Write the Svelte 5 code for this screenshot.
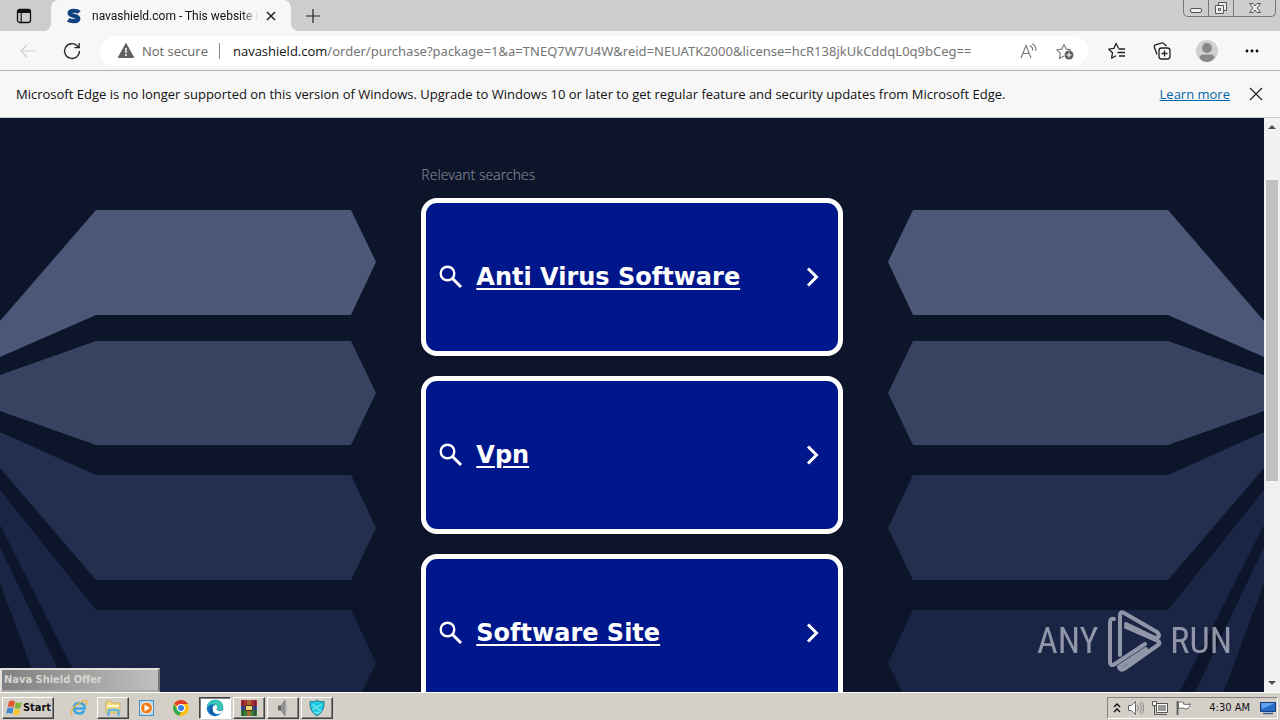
<script>
  const searches = ['Anti Virus Software', 'Vpn', 'Software Site'];
  const plates = [
    { fill: '#4c5676', points: '0,203 96,92 351,92 376,144 351,197 96,197 0,239' },
    { fill: '#384261', points: '0,257 96,223 351,223 376,275 351,327 96,327 0,293' },
    { fill: '#242e4e', points: '0,314 96,357 351,357 376,410 351,462 96,462 0,350' },
    { fill: '#1a2444', points: '0,372 96,492 351,492 376,545 351,597 96,597 0,407' },
    { fill: '#1a2444', points: '0,429 96,631 96,725 0,465' }
  ];
  let address = $state('/order/purchase?package=1&a=TNEQ7W7U4W&reid=NEUATK2000&license=hcR138jkUkCddqL0q9bCeg==');
</script>

<div class="screen">
  <header class="tabs">
    <button class="tab-actions" aria-label="Tab actions">
      <svg width="16" height="16" viewBox="0 0 16 16"><rect x="1.5" y="1.5" width="13" height="13" rx="2" fill="none" stroke="#111" stroke-width="1.3" /><path d="M1.5 3.5a2 2 0 0 1 2-2h9a2 2 0 0 1 2 2V5h-13z" fill="#111" /><path d="M5.2 5v9" stroke="#111" stroke-width="1.2" /></svg>
    </button>
    <div class="tab">
      <svg width="16" height="16" viewBox="0 0 16 16"><path d="M13.200 4.400C11.500 2.600 4 1.600 3.600 5.100 3.400 8.600 12.600 7.200 12.300 10.700 12 14 4.500 13.400 2.200 11.700" fill="none" stroke="#12417f" stroke-width="4.200" /></svg>
      <span class="tab-title">navashield.com - This website i</span>
      <button class="tab-close" aria-label="Close tab"><svg width="10" height="10" viewBox="0 0 10 10"><path d="M1 1l8 8M9 1L1 9" stroke="#222" stroke-width="1.5" /></svg></button>
    </div>
    <button class="new-tab" aria-label="New tab"><svg width="14" height="14" viewBox="0 0 14 14"><path d="M7 0v14M0 7h14" stroke="#222" stroke-width="1.2" /></svg></button>
    <div class="window-buttons">
      <button aria-label="Minimize"><svg width="14" height="12" viewBox="0 0 14 12"><rect x="1.500" y="6.500" width="11" height="4" rx="1.500" fill="#eee" stroke="#555" /></svg></button>
      <button aria-label="Restore"><svg width="14" height="14" viewBox="0 0 14 14"><path d="M4.500 1.500h8v8h-3v3h-8v-8h3z" fill="#eee" stroke="#555" /><path d="M4.500 4.500h5v5M4.500 7.500h2v2h-2z" fill="none" stroke="#555" /></svg></button>
      <button class="wide" aria-label="Close window"><svg width="14" height="12" viewBox="0 0 14 12"><path d="M1.500 1.500h3.500l2 2.500 2-2.500h3.500L9 6l3.500 4.500H9L7 8l-2 2.500H1.500L5 6z" fill="#eee" stroke="#555" /></svg></button>
    </div>
  </header>

  <nav class="toolbar">
    <button class="tool" aria-label="Back" disabled><svg width="18" height="16" viewBox="0 0 18 16"><path d="M17 8H2M8 2L2 8l6 6" fill="none" stroke="#d0d0d0" stroke-width="1.200" /></svg></button>
    <button class="tool" aria-label="Refresh"><svg width="18" height="18" viewBox="0 0 18 18"><path d="M16.400 9A7.400 7.400 0 1 1 14.200 3.800L16 5.500M16.200 1v4.700h-4.700" fill="none" stroke="#222" stroke-width="1.300" /></svg></button>
    <div class="address">
      <svg width="16" height="15" viewBox="0 0 16 15"><path d="M8 .5L15.700 14.500H.3z" fill="#606060" stroke="#606060" stroke-linejoin="round" /><path d="M8 5v5M8 11v2" stroke="#fff" stroke-width="1.500" /></svg>
      <span class="security">Not secure</span>
      <label for="url">navashield.com</label>
      <input id="url" type="text" spellcheck="false" bind:value={address} />
      <button class="in-address" aria-label="Read aloud"><svg width="18" height="16" viewBox="0 0 18 16"><path d="M1 15L6 2.500 11 15M2.800 10.500h6.400M10 2.500q3 1.500 2.800 5M12 .7q4.300 2 4 7.300" fill="none" stroke="#777" stroke-width="1.100" /></svg></button>
      <button class="in-address" aria-label="Add to favorites"><svg width="18" height="18" viewBox="0 0 18 18"><path d="M8 14l-4.500 2.400.9-5L.8 7.800l5-.7L8 2.500l2.200 4.600 5 .7" fill="none" stroke="#777" stroke-width="1.100" stroke-linejoin="round" /><circle cx="13" cy="13" r="4.500" fill="#606060" /><path d="M13 10.500v5M10.500 13h5" stroke="#fff" stroke-width="1.100" /></svg></button>
    </div>
    <button class="tool" aria-label="Favorites"><svg width="18" height="18" viewBox="0 0 18 18"><path d="M10.500 6.200L8 1.500 5.800 6.400.8 7.200l3.700 3.600-.9 5.400L8 13.700M10.500 7h6.500M9.500 10.500H17M11 14h6" fill="none" stroke="#222" stroke-width="1.300" stroke-linejoin="round" /></svg></button>
    <button class="tool" aria-label="Collections"><svg width="18" height="18" viewBox="0 0 18 18"><rect x="6" y="6" width="11" height="11" rx="2.500" fill="none" stroke="#222" stroke-width="1.300" /><path d="M11.500 8.500v6M8.500 11.500h6M4 12.500L1.400 5.200Q.8 3.400 2.500 2.800L8 1.200q1.500-.5 2.400 0L13.500 4" fill="none" stroke="#222" stroke-width="1.300" /></svg></button>
    <button class="tool" aria-label="Profile"><svg width="22" height="22" viewBox="0 0 22 22"><circle cx="11" cy="11" r="11" fill="#d2d0ce" /><circle cx="11" cy="8" r="5" fill="#8a8886" /><path d="M3.500 18q0-3.500 4-3.500h7q4 0 4 3.500-3 4-7.500 4t-7.500-4z" fill="#8a8886" /></svg></button>
    <button class="tool" aria-label="Settings and more"><svg width="14" height="4" viewBox="0 0 14 4"><circle cx="2" cy="2" r="1.400" /><circle cx="7" cy="2" r="1.400" /><circle cx="12" cy="2" r="1.400" /></svg></button>
  </nav>

  <aside class="notice">
    <span>Microsoft Edge is no longer supported on this version of Windows. Upgrade to Windows 10 or later to get regular feature and security updates from Microsoft Edge.</span>
    <a href="#learn">Learn more</a>
    <button aria-label="Dismiss"><svg width="14" height="14" viewBox="0 0 14 14"><path d="M1 1l12 12M13 1L1 13" stroke="#222" stroke-width="1.200" /></svg></button>
  </aside>

  <div class="viewport">
    <main>
      <svg class="wing" width="377" height="574" viewBox="0 0 377 574">
        {#each plates as p}<polygon points={p.points} fill={p.fill} />{/each}
      </svg>
      <section>
        <h1>Relevant searches</h1>
        {#each searches as s}
          <a class="card" href="#search">
            <svg width="24" height="24" viewBox="0 0 24 24"><circle cx="8.500" cy="8.500" r="6.800" fill="none" stroke="#fff" stroke-width="2.400" /><path d="M13.500 13.500l8.500 8.500" stroke="#fff" stroke-width="3" /></svg>
            <span>{s}</span>
            <svg width="14" height="20" viewBox="0 0 14 20"><path d="M2 1.500L10.500 10 2 18.500" fill="none" stroke="#fff" stroke-width="3" /></svg>
          </a>
        {/each}
      </section>
      <svg class="wing right" width="377" height="574" viewBox="0 0 377 574">
        <g transform="translate(377 0) scale(-1 1)">{#each plates as p}<polygon points={p.points} fill={p.fill} />{/each}</g>
      </svg>
    </main>
    <div class="scrollbar">
      <svg width="8" height="18" viewBox="0 0 8 18"><path d="M0 11l4-4 4 4z" fill="#505050" /></svg>
      <div class="track"><div class="thumb"></div></div>
      <svg width="8" height="18" viewBox="0 0 8 18"><path d="M0 7l4 4 4-4z" fill="#505050" /></svg>
    </div>
    <div class="offer">Nava Shield Offer</div>
    <div class="brand">
      <span>ANY</span>
      <svg width="56" height="62" viewBox="0 0 56 62"><g fill="none" stroke="#a5abba" stroke-width="4" stroke-linecap="round" stroke-linejoin="round"><path d="M8 9Q4 8 4 13v38q0 6 5 3l30-20" /><path d="M14 45V5q0-4 4-2l33 19q4 4 0 6l-3-.5L20 14" /><path d="M20 17l32 14q3 2 0 4L18 59q-4 2-5-2l27-18" /></g></svg>
      <span>RUN</span>
    </div>
  </div>

  <footer class="taskbar">
    <button class="start">
      <svg width="18" height="16" viewBox="0 0 18 16"><path d="M4 1.500q3-2 6 .2L8.700 7.500q-3-1.700-6-.2z" fill="#e2592b" /><path d="M10.800 2.200q3 1.500 6 0L15.500 8q-3 1.500-6 0z" fill="#7fb63c" /><path d="M2.400 8.300q3-1.500 6 .2l-1.200 5.500q-3-1.700-6-.2z" fill="#3f87d0" /><path d="M9.300 9q3 1.500 6 0L14 14.500q-3 1.500-6 0z" fill="#f6c530" /></svg>
      Start
    </button>
    <div class="apps">
      <button aria-label="Internet Explorer"><svg width="18" height="18" viewBox="0 0 18 18"><path d="M4 9.500h10.500Q14.500 4 9.300 4 4 4.200 4 9.500q.2 5 5.300 5 3.500 0 4.900-2.800" fill="none" stroke="#39a5e2" stroke-width="2.600" /><path d="M2 16Q-.5 12 6 6.500T16.500 2q1 1-1 4" fill="none" stroke="#eab73b" stroke-width="1.300" /></svg></button>
      <button class="raised" aria-label="File Explorer"><svg width="18" height="18" viewBox="0 0 18 18"><path d="M2 2h5l1 2h8v10H2z" fill="#f3d983" stroke="#c9a94c" stroke-width=".7" /><path d="M3 7h12" stroke="#fff6ca" stroke-width="2" /><path d="M4.500 17v-4q0-2 2-2h6q2 0 2 2v4" fill="none" stroke="#65b5df" stroke-width="2.500" /></svg></button>
      <button aria-label="Media Player"><svg width="18" height="18" viewBox="0 0 18 18"><rect x="1.500" y="1.500" width="14" height="15" fill="#a9d2ef" stroke="#4c93c4" /><circle cx="8.500" cy="9" r="6" fill="#f07b13" stroke="#fff" /><path d="M6.500 5.500l5.500 3.500-5.500 3.500z" fill="#fff" /></svg></button>
      <button aria-label="Chrome"><svg width="16" height="16" viewBox="0 0 16 16"><circle cx="8" cy="8" r="8" fill="#fbc116" /><path d="M8 8L1.100 4A8 8 0 0 1 14.900 4H8z" fill="#e33b2e" /><path d="M1.100 4L4.500 10l3.500 2-2 3.700A8 8 0 0 1 1.100 4z" fill="#2da94f" /><circle cx="8" cy="8" r="4" fill="#fff" /><circle cx="8" cy="8" r="3" fill="#3d7de8" /></svg></button>
      <button class="pressed" aria-label="Microsoft Edge"><svg width="18" height="18" viewBox="0 0 18 18"><circle cx="9" cy="9" r="8.300" fill="#1672c4" /><path d="M1 9Q1.500 1 9 .7T17.300 8q-.3 3-3.500 3.500-2.500 0-3-1Q12 8 9.500 6 4 3.500 1 9z" fill="#39c5b4" /><path d="M9.500 6Q5 7 6.500 11.500T15 14.500l2.500-4q-2 2-5 1.200t-1.700-2.200Q12 7 9.500 6z" fill="#fff" /><path d="M7 6Q2.500 9 4.500 14.500L10 17.200Q5 12 7 6z" fill="#0d5aa5" /></svg></button>
      <button class="raised" aria-label="WinRAR"><svg width="18" height="18" viewBox="0 0 18 18"><path d="M1 1h16v6H1z" fill="#b42c35" /><path d="M1 7h16v4H1z" fill="#3551ae" /><path d="M1 11h16v6H1z" fill="#35803f" /><path d="M7 1h4v16H7z" fill="#a56a2b" /><path d="M5.500 6.500h7v5h-7z" fill="#eed37a" stroke="#4a341a" /><path d="M3 1v16M15 1v16" stroke="#2f1b26" stroke-width=".8" /></svg></button>
      <button class="raised" aria-label="Audio"><svg width="18" height="18" viewBox="0 0 18 18"><path d="M4 6.500h3v5H4z" fill="#666" /><path d="M7 6.500L11 1v16l-4-5.500z" fill="#929292" stroke="#777" stroke-width=".5" /><path d="M11 2q2.500 7 0 14" fill="#ccc" stroke="#999" /></svg></button>
      <button class="raised" aria-label="Nava Shield"><svg width="18" height="18" viewBox="0 0 18 18"><path d="M2 2.500Q6 3.500 9 1.500q3 2 7 1 .8 10-7 14.500Q1.200 12.500 2 2.500z" fill="#20cbe2" stroke="#187e96" /><path d="M4.500 5.500l9 7M13.500 5.500l-9 5M6 13q3 2 6 0" fill="none" stroke="#7aeaf2" stroke-width="1.300" /></svg></button>
    </div>
    <div class="tray">
      <svg width="8" height="12" viewBox="0 0 8 12"><path d="M1 5l3-3 3 3M1 10l3-3 3 3" fill="none" stroke="#111" stroke-width="1.400" /></svg>
      <svg width="18" height="16" viewBox="0 0 18 16"><path d="M1.500 5.500h3l4-4v13l-4-4h-3z" fill="#fff" stroke="#666" /><path d="M10.500 5q2 3 0 6M12.500 3q3.500 5 0 10M14.500 1.500q4.500 6.500 0 13" fill="none" stroke="#888" /></svg>
      <svg width="18" height="16" viewBox="0 0 18 16"><path d="M5.500 3.500h11v9h-11z" fill="#fff" stroke="#555" /><path d="M7 5h8v6H7z" fill="#999" /><path d="M7 14.500h9M3.500 6v8.500H7" stroke="#555" fill="none" /><path d="M1.500 1.500h4v4h-4z" fill="#fff" stroke="#555" /></svg>
      <svg width="18" height="16" viewBox="0 0 18 16"><path d="M2.500 1v14" stroke="#666" stroke-width="2" /><path d="M3.500 2.500q3-1.500 5 0v1.500q3 1 7 0-1 5-5.500 5-1-1.500-6.500-.5z" fill="#fff" stroke="#666" /></svg>
      <time>4:30 AM</time>
      <svg width="16" height="14" viewBox="0 0 16 14"><path d="M.5 1.500h15v9H.5z" fill="#256bc9" stroke="#1b3d7c" /><path d="M1 2h14L2 8z" fill="#60a3ee" /><path d="M3 12.500h10" stroke="#34609d" stroke-width="1.500" /></svg>
    </div>
  </footer>
</div>

<style>
  :global(body) { margin: 0; }
  .screen { height: 100vh; display: flex; flex-direction: column; overflow: hidden; font: 13px/18px "Open Sans", sans-serif; color: #111; }
  button { display: flex; align-items: center; justify-content: center; padding: 0; border: 0; background: none; color: inherit; font: inherit; flex: none; }
  svg { flex: none; display: block; }

  .tabs { display: flex; height: 31px; flex: none; background: #cdcdcd; align-items: stretch; }
  .tab-actions { width: 51px; padding-right: 4px; }
  .tab { width: 240px; box-sizing: border-box; display: flex; align-items: center; gap: 8px; padding: 0 15px; background: #f7f7f7; border-radius: 8px 8px 0 0; font: 12px/18px Roboto, sans-serif; position: relative; }
  .tab::before, .tab::after { content: ""; position: absolute; bottom: 0; width: 8px; height: 8px; }
  .tab::before { right: 100%; background: radial-gradient(circle at 0 0, transparent 8px, #f7f7f7 8px); }
  .tab::after { left: 100%; background: radial-gradient(circle at 100% 0, transparent 8px, #f7f7f7 8px); }
  .tab-title { flex: 1; min-width: 0; overflow: hidden; white-space: nowrap; padding-left: 2px; mask-image: linear-gradient(to left, transparent, #000 16px); }
  .new-tab { width: 43px; }
  .window-buttons { margin-left: auto; margin-right: 4px; display: flex; height: 16px; border: 1px solid #777; border-top: 0; border-radius: 0 0 5px 5px; }
  .window-buttons button { width: 25px; border-right: 1px solid #777; }
  .window-buttons .wide { width: 41px; border: 0; }

  .toolbar { display: flex; align-items: center; height: 39px; flex: none; background: #f7f7f7; border-bottom: 1px solid #b4b4b4; padding: 0 6px; }
  .tool { width: 44px; height: 30px; }
  .address ~ .tool { width: 45px; }
  .address { flex: 1; min-width: 0; height: 30px; margin: 0 6px; padding: 0 5px 0 18px; display: flex; align-items: center; background: #fff; border-radius: 15px; }
  .security { color: #666; margin-left: 8px; padding-right: 11px; border-right: 1px solid #888; line-height: 16px; white-space: nowrap; }
  .address label { margin-left: 13px; }
  .address input { flex: 1; min-width: 0; border: 0; outline: 0; padding: 0; background: none; font: 13px/18px "Noto Sans", sans-serif; color: #757575; }
  .in-address { width: 36px; height: 28px; }

  .notice { display: flex; align-items: center; height: 46px; flex: none; padding: 0 17px 0 16px; background: #f7f7f7; border-bottom: 1px solid #c4c8d4; white-space: nowrap; }
  .notice span { flex: 1; min-width: 0; overflow: hidden; }
  .notice a { color: #0067a8; margin-right: 19px; }

  .viewport { flex: 1; min-height: 0; display: flex; position: relative; background: #0d152b; overflow: hidden; }
  main { flex: 1; display: grid; grid-template-columns: 1fr 1fr 1fr; align-items: start; overflow: hidden; }
  .right { justify-self: end; }
  section { display: flex; flex-direction: column; gap: 20px; padding-top: 47px; }
  h1 { margin: 0 0 -7px; font: 300 14px/20px "Noto Sans", sans-serif; color: #8a8d99; }
  .card { display: flex; align-items: center; height: 148px; padding: 0 18px 0 13px; gap: 13px; border: 5px solid #fff; border-radius: 16px; background: #00178b; color: #fff; font: bold 24px/32px "DejaVu Sans", Verdana, sans-serif; text-decoration: none; }
  .card span { flex: 1; text-decoration: underline; text-decoration-thickness: 2px; text-underline-offset: 3px; }
  .scrollbar { width: 16px; background: #f1f1f1; display: flex; flex-direction: column; align-items: center; }
  .track { flex: 1; align-self: stretch; padding: 44px 2px 0; }
  .thumb { height: 61%; background: #c1c1c1; }
  .offer { position: absolute; left: 0; bottom: 0; box-sizing: border-box; width: 160px; height: 24px; padding: 0 2px; border: 2px solid #e4e1db; border-right-color: #777; border-bottom-color: #aaa; background: linear-gradient(to right, #808080, #c0c0c0); color: #d8d5ce; font: bold 11px/20px "DejaVu Sans Condensed", Tahoma, sans-serif; white-space: nowrap; }
  .brand { position: absolute; right: 48px; bottom: 20px; display: flex; align-items: center; gap: 8px; color: #a5abba; opacity: .85; font: 400 36px/62px "Roboto Condensed", "Liberation Sans Narrow", Roboto, sans-serif; }

  .taskbar { height: 28px; flex: none; box-sizing: border-box; display: flex; align-items: center; padding: 2px 2px 0; background: #d4d0c8; border-top: 1px solid #fff; }
  .start { width: 52px; height: 22px; font: bold 11px/18px "DejaVu Sans Condensed", Tahoma, sans-serif; }
  .start, .raised { box-sizing: border-box; border: 1px solid #fff; border-right-color: #404040; border-bottom-color: #404040; box-shadow: inset -1px -1px #808080; }
  .apps { display: flex; gap: 2px; margin-left: 9px; }
  .apps button { box-sizing: border-box; width: 32px; height: 22px; }
  .apps .pressed { background: #fff; border: 1px solid #404040; border-right-color: #fff; border-bottom-color: #fff; box-shadow: inset 1px 1px #808080; }
  .tray { margin-left: auto; height: 22px; box-sizing: border-box; display: flex; align-items: center; gap: 6px; padding: 0 1px 0 5px; border: 1px solid #808080; border-right-color: #fff; border-bottom-color: #fff; }
  time { font: 11px/18px "DejaVu Sans Condensed", Tahoma, sans-serif; margin: 0 4px 0 10px; }
</style>
